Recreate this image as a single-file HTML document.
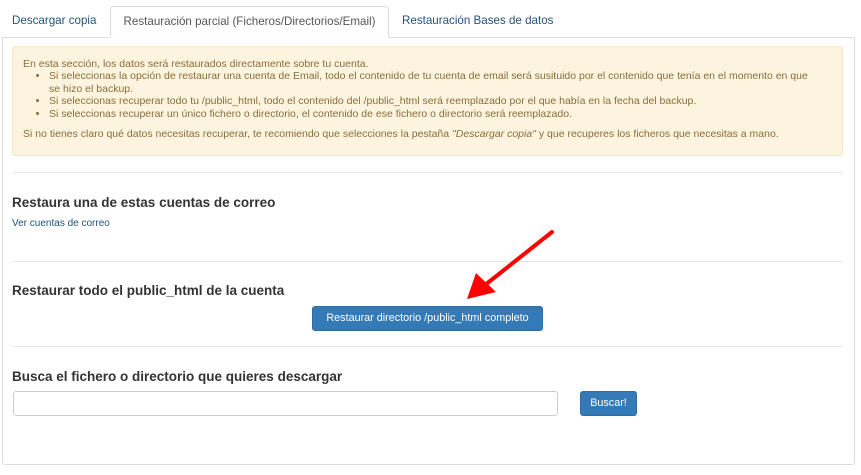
<!DOCTYPE html>
<html><head><meta charset="utf-8"><style>
*{margin:0;padding:0;box-sizing:border-box}
body{width:861px;height:475px;background:#fff;font-family:"Liberation Sans",sans-serif;position:relative;overflow:hidden;color:#333}
.a{position:absolute;white-space:nowrap}
.tab{position:absolute;top:6px;height:32px;font-size:11.6px;line-height:30px;color:#23527c;padding:0 10px}
.tab.act{border:1px solid #ddd;border-bottom:1px solid #fff;border-radius:4px 4px 0 0;color:#555;background:#fff;z-index:2}
.box{position:absolute;left:2px;top:37px;width:853px;height:428px;border:1px solid #ddd;border-radius:0 0 3px 3px}
.alert{position:absolute;left:12px;top:46px;width:831px;height:110px;background:#fcf4de;border:1px solid #f7e6c0;border-radius:3px;color:#8a6d3b;font-size:10.5px;line-height:12.4px;padding:11px 10px}
.alert ul{margin-left:26px;padding-right:6px}
.hr{position:absolute;left:12px;width:831px;height:1px;background:#e8e8e8}
h3{position:absolute;left:12px;font-size:13.5px;font-weight:bold;color:#333;white-space:nowrap}
.btn{position:absolute;background:#337ab7;border:1px solid #2e6da4;border-radius:3px;color:#fff;font-size:10.8px;text-align:center}
</style></head><body>
<div class="tab" style="left:2px">Descargar copia</div>
<div class="tab act" style="left:110px;width:279px;text-align:center;padding:0">Restauración parcial (Ficheros/Directorios/Email)</div>
<div class="tab" style="left:392px">Restauración Bases de datos</div>
<div class="box"></div>
<div class="alert">
En esta sección, los datos será restaurados directamente sobre tu cuenta.
<ul>
<li>Si seleccionas la opción de restaurar una cuenta de Email, todo el contenido de tu cuenta de email será susituido por el contenido que tenía en el momento en que<br>se hizo el backup.</li>
<li>Si seleccionas recuperar todo tu /public_html, todo el contenido del /public_html será reemplazado por el que había en la fecha del backup.</li>
<li>Si seleccionas recuperar un único fichero o directorio, el contenido de ese fichero o directorio será reemplazado.</li>
</ul>
<div style="margin-top:8px">Si no tienes claro qué datos necesitas recuperar, te recomiendo que selecciones la pestaña <i>"Descargar copia"</i> y que recuperes los ficheros que necesitas a mano.</div>
</div>
<div class="hr" style="top:172px"></div>
<h3 style="top:195px">Restaura una de estas cuentas de correo</h3>
<div class="a" style="left:12px;top:218px;font-size:10px;color:#23527c">Ver cuentas de correo</div>
<div class="hr" style="top:261px"></div>
<h3 style="top:283px">Restaurar todo el public_html de la cuenta</h3>
<div class="btn" style="left:312px;top:306px;width:231px;height:25px;line-height:23px">Restaurar directorio /public_html completo</div>
<div class="hr" style="top:346px"></div>
<h3 style="top:369px">Busca el fichero o directorio que quieres descargar</h3>
<div class="a" style="left:13px;top:391px;width:545px;height:25px;border:1px solid #ccc;border-radius:3px"></div>
<div class="btn" style="left:580px;top:391px;width:57px;height:25px;line-height:23px">Buscar!</div>
<svg class="a" style="left:0;top:0" width="861" height="475">
<line x1="552" y1="232" x2="485" y2="285" stroke="#f00" stroke-width="4" stroke-linecap="round"/>
<polygon points="467,299 476,273 496,292" fill="#f00"/>
</svg>
</body></html>
